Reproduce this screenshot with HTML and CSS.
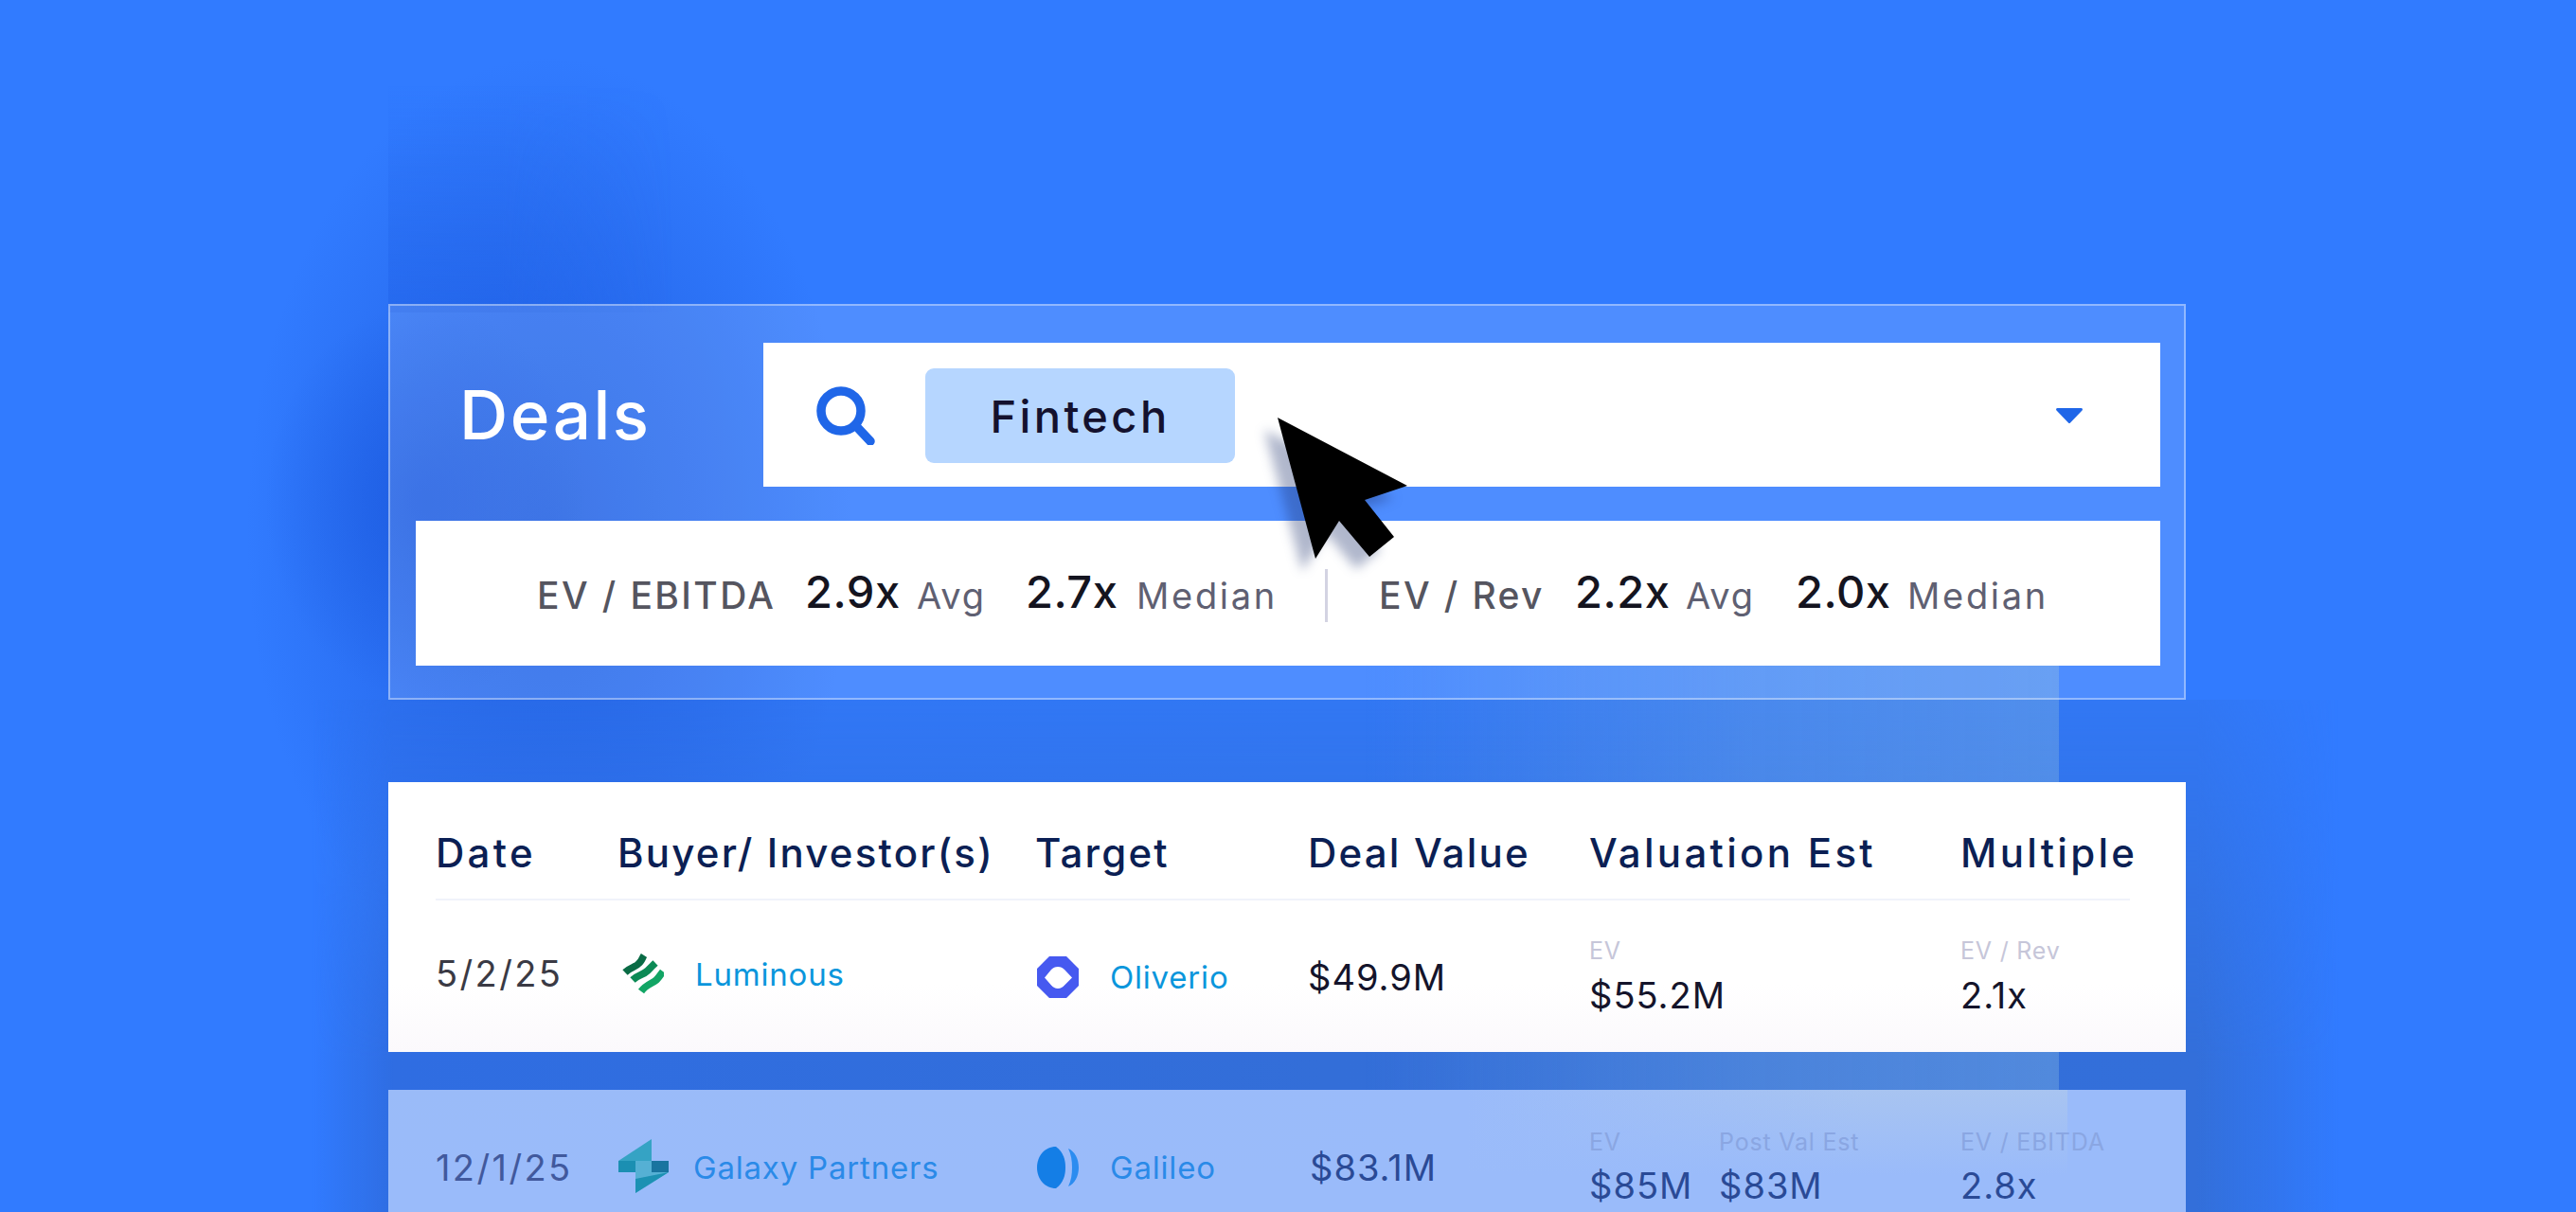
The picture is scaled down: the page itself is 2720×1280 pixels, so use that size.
FILE: index.html
```html
<!DOCTYPE html>
<html lang="en">
<head>
<meta charset="utf-8">
<title>Deals</title>
<link rel="stylesheet" href="styles.css">
</head>
<body>
<main class="stage">
  <div class="glow glow-left"></div>
  <div class="glow glow-left-core"></div>
  <div class="glow glow-top"></div>
  <div class="glow band-dark"></div>
  <div class="glow band-light"></div>

  <section class="panel">
    <div class="panel-top">
      <h1 class="title">Deals</h1>
      <div class="search">
        <svg class="search-icon" viewBox="0 0 62 62" aria-hidden="true"><circle cx="26" cy="26" r="21" fill="none" stroke="#1f66e8" stroke-width="9.500"/><path d="M41 41 57 58" fill="none" stroke="#1f66e8" stroke-width="9.500" stroke-linecap="round"/></svg>
        <span class="chip">Fintech</span>
        <svg class="caret" viewBox="0 0 28 16" aria-hidden="true"><path d="M1.500 0h25a1.400 1.400 0 0 1 1 2.400L15 15.400a1.400 1.400 0 0 1-2 0L.5 2.400A1.400 1.400 0 0 1 1.500 0z" fill="#1f66e8"/></svg>
      </div>
    </div>
    <div class="stats">
      <span class="stat-name w-ebitda">EV / EBITDA</span>
      <b class="stat-val w-a">2.9x</b>
      <span class="stat-lab w-b">Avg</span>
      <b class="stat-val w-c">2.7x</b>
      <span class="stat-lab wide w-d">Median</span>
      <i class="stat-rule"></i>
      <span class="stat-name w-rev">EV / Rev</span>
      <b class="stat-val w-e">2.2x</b>
      <span class="stat-lab w-f">Avg</span>
      <b class="stat-val w-g">2.0x</b>
      <span class="stat-lab wide">Median</span>
    </div>
  </section>

  <section class="card">
    <div class="grid head">
      <span class="h-wide">Date</span><span>Buyer/ Investor(s)</span><span>Target</span><span>Deal Value</span><span class="h-wide">Valuation Est</span><span class="h-wide">Multiple</span>
    </div>
    <div class="grid row">
      <span class="date">5/2/25</span>
      <span class="co co-up">
        <svg class="logo lum" viewBox="0 0 44 44" aria-hidden="true">
          <g fill="none" stroke-width="7.500">
            <path d="M3 21C9 15 14 16 18 11 21 8 21 6 23 3" stroke="#0a6b45"/>
            <path d="M11 29C17 23 22 24 27 19 31 15 32 14 35 11" stroke="#0c8a55"/>
            <path d="M20 41C25 34 31 33 36 29 39 26 40 24 43 20" stroke="#12a565"/>
          </g>
        </svg>
        <span class="link">Luminous</span>
      </span>
      <span class="co">
        <svg class="logo tgt" viewBox="0 0 44 44" aria-hidden="true"><path fill-rule="evenodd" d="M13 0h18l13 13v18L31 44H13L0 31V13ZM8 22.500 15 30.500c2 2 4 3.500 7 3.500s5-1.500 7-3.500l8-8-8-8.500c-2-2-4-3-7-3s-5 1-7 3Z" fill="#4659f0"/></svg>
        <span class="link">Oliverio</span>
      </span>
      <span class="val">$49.9M</span>
      <span class="pair"><span class="mini">EV</span><span class="val">$55.2M</span></span>
      <span class="pair"><span class="mini">EV / Rev</span><span class="val">2.1x</span></span>
    </div>
  </section>

  <section class="card faded">
    <div class="grid row row-faded">
      <span class="date">12/1/25</span>
      <span class="co">
        <svg class="logo gal" viewBox="0 0 53 57" aria-hidden="true">
          <path d="M35 0V23H0Z" fill="#35a3c4"/>
          <path d="M0 23H18V35H0Z" fill="#1b8fb2"/>
          <path d="M18 23H35V35H53L18 57Z" fill="#55b0d4"/>
          <path d="M35 23H53V35H35Z" fill="#19749f"/>
          <path d="M18 42 53 35 18 57Z" fill="#1c91b3"/>
        </svg>
        <span class="link">Galaxy Partners</span>
      </span>
      <span class="co">
        <svg class="logo tgt" viewBox="0 0 44 44" aria-hidden="true"><path d="M20 0C8 0 0 10 0 22s8 22 20 22c8-6 10-14 10-22S28 6 20 0Z" fill="#147ee6"/><path d="M33 2c7 3 11 11 11 20s-4 17-11 20c3-6 4-13 4-20s-1-14-4-20Z" fill="#2b8cf0"/></svg>
        <span class="link">Galileo</span>
      </span>
      <span class="val shift">$83.1M</span>
      <span class="pair-wrap">
        <span class="pair"><span class="mini">EV</span><span class="val">$85M</span></span>
        <span class="pair"><span class="mini">Post Val Est</span><span class="val">$83M</span></span>
      </span>
      <span class="pair"><span class="mini">EV / EBITDA</span><span class="val">2.8x</span></span>
    </div>
  </section>

  <svg class="cursor" viewBox="0 0 140 152" aria-hidden="true"><path d="M3 3 140 75 95 90 126 129 100 150 68 112 43 152Z" fill="#000"/></svg>
</main>
</body>
</html>
```
FILE: styles.css
```css
* { box-sizing: border-box; }
html, body { margin: 0; padding: 0; }
body { font-family: Inter, "Liberation Sans", sans-serif; }

.stage {
  position: relative;
  width: 2720px;
  height: 1280px;
  overflow: hidden;
  background: #317bff;
  padding: 321px 412px 0 410px;
}

.glow { position: absolute; }
.glow-left {
  left: 260px; top: 60px; width: 640px; height: 1000px;
  background: radial-gradient(closest-side, rgba(25, 85, 215, .7), rgba(30, 90, 220, .35) 62%, rgba(49, 123, 255, 0));
}
.glow-left-core {
  left: 280px; top: 320px; width: 340px; height: 420px;
  background: radial-gradient(closest-side, rgba(20, 80, 215, .55), rgba(20, 80, 215, 0));
}
.glow-top {
  left: 410px; top: 90px; width: 300px; height: 240px;
  background: linear-gradient(rgba(30, 95, 230, 0), rgba(30, 95, 230, .42));
  -webkit-mask-image: linear-gradient(90deg, #000 40%, rgba(0, 0, 0, 0));
  mask-image: linear-gradient(90deg, #000 40%, rgba(0, 0, 0, 0));
}
.band-dark {
  left: 330px; top: 739px; width: 2140px; height: 541px;
  background: linear-gradient(90deg, rgba(47, 109, 226, 0), #2f6de2 4%, #336ed8 50%, #336fda 93%, rgba(49, 120, 245, 0));
  -webkit-mask-image: linear-gradient(rgba(0, 0, 0, .3), #000 70%);
  mask-image: linear-gradient(rgba(0, 0, 0, .3), #000 70%);
}
.band-light {
  left: 1440px; top: 640px; width: 734px; height: 530px;
  background: linear-gradient(90deg, rgba(125, 175, 225, 0), rgba(125, 175, 225, .32) 55%, rgba(125, 175, 225, .42));
  -webkit-mask-image: linear-gradient(rgba(0, 0, 0, 0), #000 60px);
  mask-image: linear-gradient(rgba(0, 0, 0, 0), #000 60px);
}

.panel, .card { position: relative; }
.panel {
  height: 418px;
  border: 2px solid rgba(255, 255, 255, .38);
  background: rgba(255, 255, 255, .14);
  padding: 39px 25px 0 27px;
}
.panel-top { display: flex; align-items: stretch; height: 152px; }
.title {
  width: 367px; margin: 0; padding-left: 46px;
  font-size: 71px; line-height: 152px; font-weight: 450;
  letter-spacing: 2.500px; color: #fff;
}
.search {
  flex: 1; background: #fff;
  display: flex; align-items: center;
  padding: 2px 82px 0 56px;
}
.search-icon { width: 62px; height: 62px; margin-right: 53px; }
.chip {
  width: 327px; height: 100px; border-radius: 9px;
  background: #b6d6ff; color: #14112e;
  font-size: 47px; font-weight: 500; letter-spacing: 3.400px;
  display: flex; align-items: center; justify-content: center;
}
.caret { width: 28px; height: 16px; margin-left: auto; }

.stats {
  margin-top: 36px; height: 153px; background: #fff;
  display: flex; align-items: center;
  padding: 4px 0 0 128px;
  font-size: 38px; line-height: 56px;
}
.stats > * { flex: none; }
.stat-name { color: #55555f; font-size: 39px; font-weight: 500; letter-spacing: 2.400px; }
.stat-lab { color: #5f6072; font-weight: 400; letter-spacing: 1.700px; }
.stat-lab.wide { letter-spacing: 2.700px; }
.stat-val { color: #14141f; font-size: 47px; font-weight: 500; letter-spacing: .5px; position: relative; top: -4px; }
.stat-rule { width: 3px; height: 56px; background: #d3d3e2; margin: 0 54px 0 0; }
.w-ebitda { width: 283px; }
.w-a { width: 118px; }
.w-b { width: 115px; }
.w-c { width: 117px; }
.w-d { width: 199px; }
.w-rev { width: 207px; }
.w-e { width: 117px; }
.w-f { width: 116px; }
.w-g { width: 118px; }

.card {
  margin-top: 87px;
  height: 285px;
  background: linear-gradient(#fff 0, #fff 75%, #fbf9fc 100%);
  padding: 0 0 0 50px;
}
.grid {
  display: grid;
  grid-template-columns: 192px 441px 288px 297px 392px 1fr;
}
.head {
  height: 125px;
  margin-right: 59px;
  align-items: center;
  padding: 26px 0 0 0;
  border-bottom: 2px solid #f0f3fb;
  font-size: 42px; font-weight: 500; letter-spacing: 2.200px;
  color: #0b1f54;
}
.h-wide { letter-spacing: 3.300px; }
.row { height: 161px; align-items: center; }

.date { font-size: 38px; color: #3a3a44; letter-spacing: 2.400px; padding-bottom: 7px; }
.co { display: flex; align-items: center; }
.co-up .link { position: relative; top: -3px; }
.logo { width: 44px; height: 44px; margin-right: 35px; flex: none; }
.lum { margin: -8px 33px 0 5px; }
.tgt { margin: 0 33px 0 2px; }
.link { font-size: 33px; color: #0a96dc; letter-spacing: .8px; }
.val { font-size: 38px; color: #14142b; letter-spacing: 1px; line-height: 46px; }
.pair { display: flex; flex-direction: column; gap: 9px; }
.mini { font-size: 25px; line-height: 30px; color: #c6c6d9; letter-spacing: .8px; }
.pair-wrap { display: flex; gap: 30px; }
.pair-wrap .pair:first-child { width: 107px; }

.faded {
  margin-top: 40px;
  height: 200px;
  background:
    linear-gradient(rgba(154, 187, 250, 0), #9abbfa 45%),
    linear-gradient(90deg, #9abbf8, #9abbfa 60%, #a8c4f1 82%, #a8c4f1 93.400%, #9abbfa 93.400%);
}
.row-faded { height: 163px; }
.row-faded .pair { gap: 8px; }
.row-faded .date { color: #41599d; padding-bottom: 0; }
.row-faded .link { color: #2a8ae8; }
.row-faded .val { color: #2a4a96; }
.row-faded .mini { color: #8aa6e2; }
.gal { width: 53px; height: 57px; margin: -3px 26px 0 1px; }
.shift { margin-left: 2px; }

.cursor {
  position: absolute;
  left: 1346px; top: 438px;
  width: 140px; height: 152px;
  filter: drop-shadow(-14px 13px 6px rgba(30, 50, 110, .35));
}
```
